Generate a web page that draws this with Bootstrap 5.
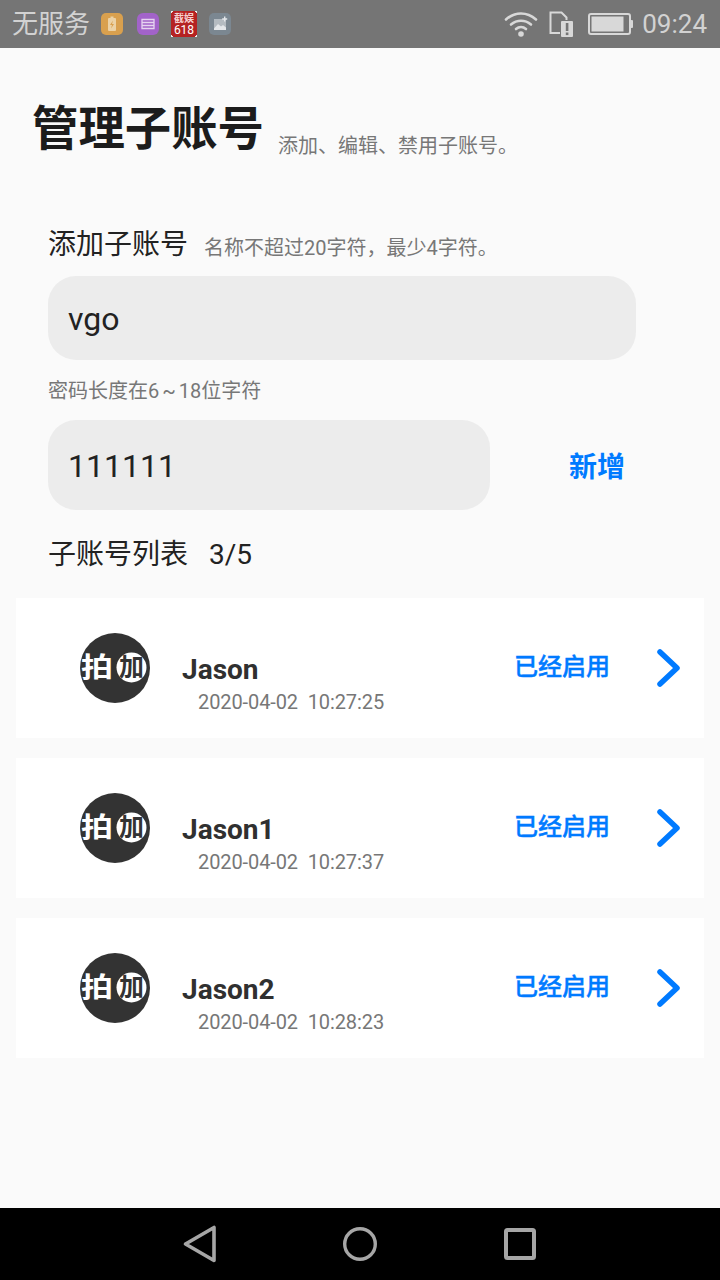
<!DOCTYPE html>
<html lang="zh">
<head>
<meta charset="utf-8">
<title>管理子账号</title>
<link rel="stylesheet" href="https://cdn.jsdelivr.net/npm/bootstrap@5.3.0/dist/css/bootstrap.min.css">
<style>
html,body{height:1280px;overflow:hidden}
body{font-family:Roboto,"Noto Sans CJK SC",sans-serif;background:#fafafa;color:#222;width:720px}
.screen{height:1280px}
.sbar{height:48px;background:#757575;color:#d2d2d2;padding:0 13px 0 12px;font-size:26px}
.sbar .carrier{font-size:26px;margin-right:11px;line-height:48px}
.sbar svg{display:block;flex:none}
.ic-2{margin-left:14px}
.ic-3{margin-left:12px}
.ic-4{margin-left:12px}
.ic-sim{margin-left:11px}
.ic-bat{margin-left:14px}
.clock{font-size:26px;margin-left:9px;line-height:48px}
.content{flex:1 1 0;min-height:0}
.head-row{padding:31px 0 0 32px;height:113px;align-items:flex-end}
.head-main{font-size:46.4px;font-weight:700;line-height:64px;color:#1c1c1c;margin:0 14px 0 0}
.head-sub{font-size:20px;line-height:28px;color:#777;padding-bottom:1px}
.form-wrap{padding:0 48px}
.label-row{height:38px;margin-top:65px;align-items:center}
.label-main{font-size:28px;line-height:38px;color:#222;margin-right:16px}
.label-sub{font-size:20px;color:#777;line-height:28px;padding-top:6px}
.field{background:#ececec;border:0;box-shadow:none;color:#222;font-family:Roboto,sans-serif;font-size:32px;padding:2px 20px 0;border-radius:28px}
.field:focus{background:#ececec;box-shadow:none}
.f1{width:588px;height:84px;margin-top:12px}
.f2{width:442px;height:90px}
.pw-hint{font-size:20px;line-height:28px;color:#777;margin-top:17px;margin-bottom:15px;word-spacing:-2px}
.add-btn{font-size:28px;font-weight:700;color:#007aff;padding:0;border:0;margin:6px 0 0 79px;line-height:40px;background:none}
.count{height:38px;margin-top:26px;font-size:28px;line-height:38px;align-items:center}
.count span+span{margin-left:21px}
.acct-list{padding:24px 16px 0;gap:20px}
.acct-list .acct{height:140px;background:#fff;border:0;border-radius:0;padding:0 23px 0 64px}
.logo{width:70px;height:70px;border-radius:50%;background:#333;flex:none;margin-right:32px}
.logo svg{display:block}
.logo-a{font-family:"Noto Sans CJK SC",sans-serif;font-weight:700;font-size:27px}
.logo-b{font-family:"Noto Sans CJK SC",sans-serif;font-weight:700;font-size:25px}
.acct-name{font-size:28px;font-weight:700;line-height:36px;color:#303030}
.acct-date{font-size:20px;line-height:26px;color:#777;padding-left:16px;white-space:pre;letter-spacing:-.1px;margin-top:1px}
.acct-text{padding-top:30px}
.acct-state{font-size:24px;font-weight:500;-webkit-text-stroke:.4px #007aff;color:#007aff;margin-right:47px;line-height:34px;padding-bottom:2px}
.navbar-sys{height:72px;background:#000;padding-left:183px}
.nav-c{margin-left:125px}
.nav-s{margin-left:126px}
</style>
</head>
<body>
<div class="screen d-flex flex-column">
  <div class="sbar d-flex justify-content-between align-items-center">
    <div class="d-flex align-items-center">
      <span class="carrier">无服务</span>
      <svg width="22" height="22" viewBox="0 0 22 22"><rect width="22" height="22" rx="5" fill="#d9a04e"/><rect x="7" y="5" width="8" height="13" rx="1" fill="#ecd2a6"/><rect x="9.500" y="3.500" width="3" height="2" fill="#ecd2a6"/><path d="M12 7.500 9 12h2l-1 3.500 3-4.500h-2z" fill="#d9a04e"/></svg>
      <svg class="ic-2" width="22" height="22" viewBox="0 0 22 22"><rect width="22" height="22" rx="6" fill="#a263c9"/><path d="M5 6.500h12v9H5zM5 9.500h12M5 12.500h12" fill="none" stroke="#e6d4f0" stroke-width="1.300"/></svg>
      <svg class="ic-3" width="26" height="26" viewBox="0 0 26 26"><rect width="26" height="26" fill="#b52222"/><path d="M0 0h2v1H1v1H0zM26 0h-2v1h1v1h1zM0 26h2v-1H1v-1H0zM26 26h-2v-1h1v-1h1z" fill="#eee"/><text x="13" y="11" text-anchor="middle" font-size="10" font-weight="700" fill="#f5d0d0" font-family="Noto Sans CJK SC">截娱</text><text x="13" y="23" text-anchor="middle" font-size="12" fill="#fff" font-family="Roboto">618</text></svg>
      <svg class="ic-4" width="22" height="22" viewBox="0 0 22 22"><rect width="22" height="22" rx="5" fill="#7b8791"/><rect x="5" y="6" width="12" height="11" fill="#b4bbc1"/><path d="M5 15.500l4-4.500 3 2.500 2-1.500 3 2.500V17H5z" fill="#e4e7ea"/><path d="M15 3.500h1.400v1.800h1.800v1.400h-1.800v1.800H15V6.700h-1.800V5.300H15z" fill="#e4e7ea"/></svg>
    </div>
    <div class="d-flex align-items-center">
      <svg width="34" height="26" viewBox="0 0 34 26"><g fill="none" stroke="#d8d8d8" stroke-width="2.600" stroke-linecap="round"><path d="M2 8.500c9-8 21-8 30 0"/><path d="M7 13.500c6-5 14-5 20 0"/><path d="M12 18c3-2.500 7-2.500 10 0"/></g><circle cx="17" cy="23" r="2.800" fill="#d8d8d8"/></svg>
      <svg class="ic-sim" width="25" height="26" viewBox="0 0 25 26"><path d="M1.500 1.500h11l5 5V22h-16z" fill="none" stroke="#d8d8d8" stroke-width="2"/><rect x="11" y="9" width="14" height="17" fill="#757575"/><rect x="12" y="10" width="12" height="16" rx="1" fill="#d8d8d8"/><rect x="16.800" y="12" width="2.600" height="8" fill="#757575"/><rect x="16.800" y="21.500" width="2.600" height="2.600" fill="#757575"/></svg>
      <svg class="ic-bat" width="45" height="22" viewBox="0 0 45 22"><rect x="1" y="1" width="41" height="20" rx="2" fill="none" stroke="#d8d8d8" stroke-width="2"/><rect x="3.500" y="3.500" width="32" height="15" fill="#d8d8d8"/><rect x="42.500" y="7" width="2.500" height="8" rx="1" fill="#d8d8d8"/></svg>
      <span class="clock">09:24</span>
    </div>
  </div>

  <div class="content d-flex flex-column">
    <div class="head-row d-flex">
      <h1 class="head-main">管理子账号</h1>
      <span class="head-sub">添加、编辑、禁用子账号。</span>
    </div>
    <div class="form-wrap">
      <div class="label-row d-flex">
        <span class="label-main">添加子账号</span>
        <span class="label-sub">名称不超过20字符，最少4字符。</span>
      </div>
      <input class="form-control field f1" value="vgo">
      <div class="pw-hint">密码长度在6 ~ 18位字符</div>
      <div class="d-flex align-items-center">
        <input class="form-control field f2" value="111111">
        <button class="btn add-btn" type="button">新增</button>
      </div>
      <div class="count d-flex">
        <span>子账号列表</span><span>3/5</span>
      </div>
    </div>
    <div class="acct-list list-group">
      <div class="list-group-item acct d-flex align-items-center">
        <div class="logo"><svg width="70" height="70" viewBox="0 0 70 70"><circle cx="51.500" cy="34.500" r="15" fill="#fff"/><text x="1" y="44" textLength="32" lengthAdjust="spacingAndGlyphs" class="logo-a" fill="#fff">拍</text><text x="51.500" y="43" text-anchor="middle" class="logo-b" fill="#333">加</text></svg></div>
        <div class="acct-text flex-grow-1"><div class="acct-name">Jason</div><div class="acct-date">2020-04-02  10:27:25</div></div>
        <span class="acct-state">已经启用</span>
        <svg width="24" height="38" viewBox="0 0 24 38"><path d="M3 3l17 16L3 35" fill="none" stroke="#007aff" stroke-width="5.500" stroke-linecap="round" stroke-linejoin="round"/></svg>
      </div>
      <div class="list-group-item acct d-flex align-items-center">
        <div class="logo"><svg width="70" height="70" viewBox="0 0 70 70"><circle cx="51.500" cy="34.500" r="15" fill="#fff"/><text x="1" y="44" textLength="32" lengthAdjust="spacingAndGlyphs" class="logo-a" fill="#fff">拍</text><text x="51.500" y="43" text-anchor="middle" class="logo-b" fill="#333">加</text></svg></div>
        <div class="acct-text flex-grow-1"><div class="acct-name">Jason1</div><div class="acct-date">2020-04-02  10:27:37</div></div>
        <span class="acct-state">已经启用</span>
        <svg width="24" height="38" viewBox="0 0 24 38"><path d="M3 3l17 16L3 35" fill="none" stroke="#007aff" stroke-width="5.500" stroke-linecap="round" stroke-linejoin="round"/></svg>
      </div>
      <div class="list-group-item acct d-flex align-items-center">
        <div class="logo"><svg width="70" height="70" viewBox="0 0 70 70"><circle cx="51.500" cy="34.500" r="15" fill="#fff"/><text x="1" y="44" textLength="32" lengthAdjust="spacingAndGlyphs" class="logo-a" fill="#fff">拍</text><text x="51.500" y="43" text-anchor="middle" class="logo-b" fill="#333">加</text></svg></div>
        <div class="acct-text flex-grow-1"><div class="acct-name">Jason2</div><div class="acct-date">2020-04-02  10:28:23</div></div>
        <span class="acct-state">已经启用</span>
        <svg width="24" height="38" viewBox="0 0 24 38"><path d="M3 3l17 16L3 35" fill="none" stroke="#007aff" stroke-width="5.500" stroke-linecap="round" stroke-linejoin="round"/></svg>
      </div>
    </div>
  </div>

  <div class="navbar-sys d-flex align-items-center">
    <svg width="34" height="40" viewBox="0 0 34 40"><path d="M31 3.500v33L2.500 20z" fill="none" stroke="#a6a6a6" stroke-width="3.600" stroke-linejoin="round"/></svg>
    <svg class="nav-c" width="36" height="36" viewBox="0 0 36 36"><circle cx="18" cy="18" r="15.300" fill="none" stroke="#a6a6a6" stroke-width="3.400"/></svg>
    <svg class="nav-s" width="32" height="32" viewBox="0 0 32 32"><rect x="2" y="2" width="28" height="28" rx="1.500" fill="none" stroke="#a6a6a6" stroke-width="4"/></svg>
  </div>
</div>
</body>
</html>
